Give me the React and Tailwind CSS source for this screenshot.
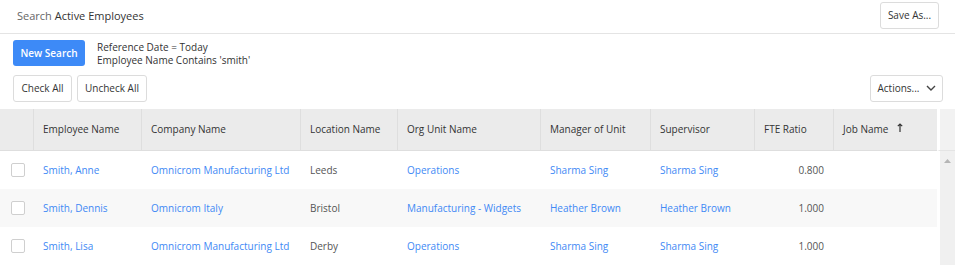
import React from 'react';

const cols = 'grid grid-cols-[34px_108px_159px_97px_143px_110px_104px_79px_103px]';

const rows = [
  { name: 'Smith, Anne', company: 'Omnicrom Manufacturing Ltd', location: 'Leeds', org: 'Operations', manager: 'Sharma Sing', supervisor: 'Sharma Sing', fte: '0.800' },
  { name: 'Smith, Dennis', company: 'Omnicrom Italy', location: 'Bristol', org: 'Manufacturing - Widgets', manager: 'Heather Brown', supervisor: 'Heather Brown', fte: '1.000' },
  { name: 'Smith, Lisa', company: 'Omnicrom Manufacturing Ltd', location: 'Derby', org: 'Operations', manager: 'Sharma Sing', supervisor: 'Sharma Sing', fte: '1.000' },
];

const headers = ['Employee Name', 'Company Name', 'Location Name', 'Org Unit Name', 'Manager of Unit', 'Supervisor', 'FTE Ratio'];

function Btn({ children, className = '' }) {
  return (
    <button className={`h-[27px] border border-[#dcdcdc] rounded-[3px] bg-white text-[10px] text-[#333] flex items-center whitespace-nowrap ${className}`}>
      {children}
    </button>
  );
}

export default function App() {
  return (
    <div className="w-[955px] h-[267px] bg-white overflow-hidden text-[#333] whitespace-nowrap" style={{ fontFamily: '"Open Sans", sans-serif' }}>
      <div className="h-[34px] border-b border-[#e4e4e4] flex items-center justify-between pl-[17px] pr-[16px]">
        <div className="text-[11px]">
          <span className="text-[#666]">Search</span> <span className="text-[#333]">Active Employees</span>
        </div>
        <Btn className="w-[59px] justify-center mt-[-2px]">Save As...</Btn>
      </div>

      <div className="flex items-start pl-[13px] pt-[6px]">
        <button className="w-[72px] h-[26px] rounded-[3px] bg-[#3d8af7] text-white text-[10px] font-semibold">New Search</button>
        <div className="ml-[12px] text-[10px] leading-[13px] text-[#333] pt-[1px]">
          <div>Reference Date = Today</div>
          <div>Employee Name Contains 'smith'</div>
        </div>
      </div>

      <div className="flex items-center justify-between pl-[13px] pr-[12px] mt-[8px]">
        <div className="flex gap-[5px]">
          <Btn className="w-[59px] justify-center">Check All</Btn>
          <Btn className="w-[70px] justify-center">Uncheck All</Btn>
        </div>
        <Btn className="w-[73px] justify-center gap-[6px]">
          Actions...
          <svg width="10" height="7" viewBox="0 0 10 7" fill="none" stroke="#444" strokeWidth="1.4">
            <path d="M1 1l4 4 4-4" />
          </svg>
        </Btn>
      </div>

      <div className="flex mt-[7px]">
        <div className="w-[937px]">
          <div className={`${cols} h-[42px] bg-[#ebebeb] border-b border-[#dedede] text-[10px] text-[#333]`}>
            <div className="border-r border-[#dedede]" />
            {headers.map((h) => (
              <div key={h} className="border-r border-[#dedede] flex items-center pl-[9px]">{h}</div>
            ))}
            <div className="flex items-center pl-[9px]">
              Job Name
              <svg className="ml-[9px] mb-[4px]" width="6" height="9" viewBox="0 0 6 9" fill="none" stroke="#333" strokeWidth="1.2">
                <path d="M3 9V1M0.8 3.2L3 1l2.2 2.2" />
              </svg>
            </div>
          </div>
          {rows.map((r, i) => (
            <div key={r.name} className={`${cols} h-[38px] text-[10px] ${i === 1 ? 'bg-[#f8f8f8]' : 'bg-white'}`}>
              <div className="flex items-center pl-[11px]">
                <div className="w-[14px] h-[14px] border border-[#cfcfcf] rounded-[2px] bg-white" />
              </div>
              <div className="flex items-center pl-[9px] text-[#4189f5]">{r.name}</div>
              <div className="flex items-center pl-[9px] text-[#4189f5]">{r.company}</div>
              <div className="flex items-center pl-[9px] text-[#555]">{r.location}</div>
              <div className="flex items-center pl-[9px] text-[#4189f5]">{r.org}</div>
              <div className="flex items-center pl-[9px] text-[#4189f5]">{r.manager}</div>
              <div className="flex items-center pl-[9px] text-[#4189f5]">{r.supervisor}</div>
              <div className="flex items-center justify-end pr-[10px] text-[#555]">{r.fte}</div>
              <div />
            </div>
          ))}
        </div>
        <div className="w-[18px] flex flex-col">
          <div className="h-[42px] border-l-[3px] border-white bg-[#f2f2f2] border-b border-b-[#e4e4e4]" />
          <div className="flex-1 bg-[#f0f0f0] ml-[3px] flex justify-center pt-[8px]">
            <svg width="7" height="4" viewBox="0 0 7 4">
              <path d="M0 4L3.5 0 7 4z" fill="#b5b5b5" />
            </svg>
          </div>
        </div>
      </div>
    </div>
  );
}
